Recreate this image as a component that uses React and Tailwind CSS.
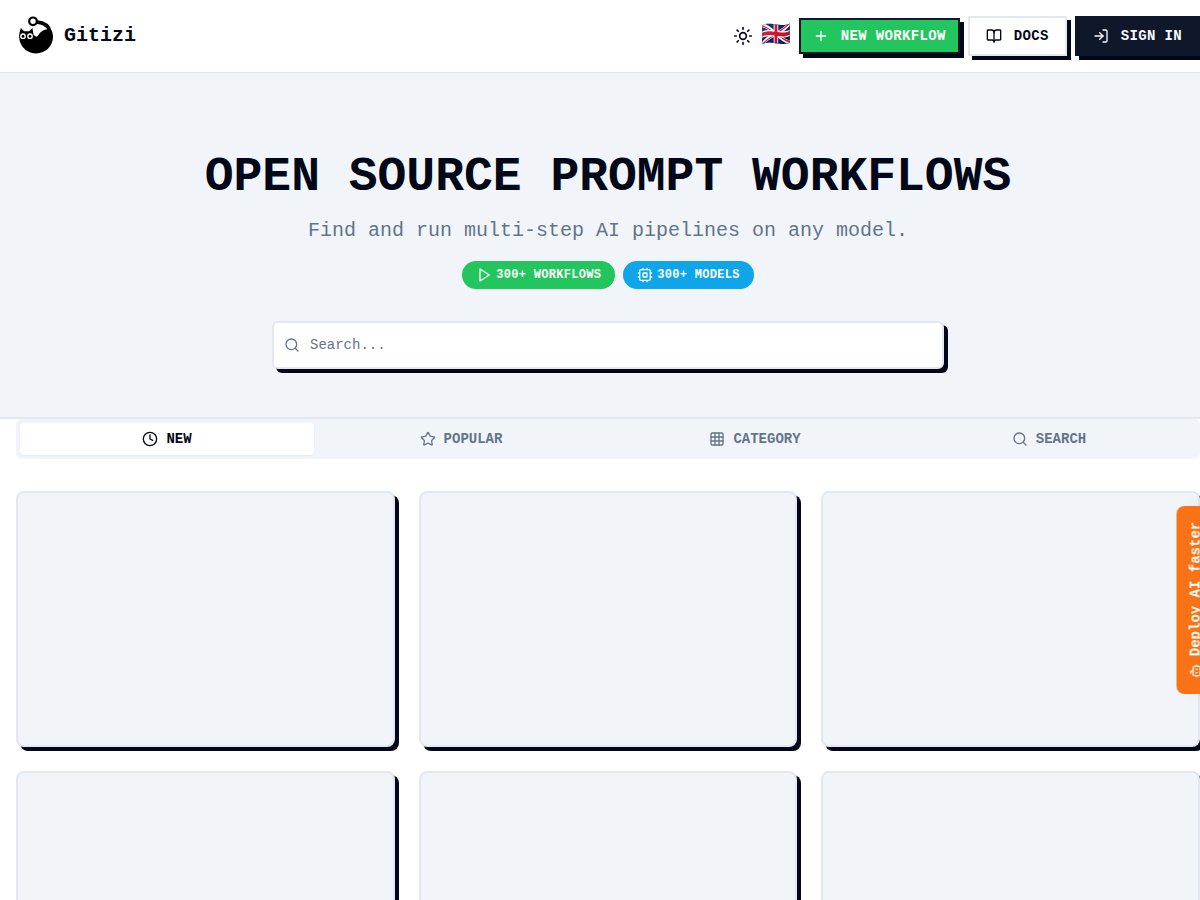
import React, { useState } from 'react'
import { BookOpen, Bot, Clock, Grid3x3, LogIn, Plus, Search, Star, Sun } from 'lucide-react';

const tabs = [
  { id: "new", label: "NEW", Icon: Clock },
  { id: "popular", label: "POPULAR", Icon: Star },
  { id: "category", label: "CATEGORY", Icon: Grid3x3 },
  { id: "search", label: "SEARCH", Icon: Search },
];

const Logo = () => (
  <svg viewBox="0 0 40 40" className="h-10 w-10" aria-hidden="true">
    <path
      d="M4.8 12L8.2 15.2H13L16.4 12L17.6 19L20.2 20.8Q22.4 19.8 23.4 17.4Q26 14.2 31.4 13.3Q28 8.4 21 7.9V4.2Q33.5 4.8 36.3 16.2Q38 22 35.6 27.5A17 17 0 0 1 3.6 16.5Z"
      fill="#000"
    />
    <circle cx="17" cy="5.3" r="3.8" fill="#fff" stroke="#000" strokeWidth="2.2" />
    <circle cx="7" cy="20.2" r="2.2" fill="#000" stroke="#fff" strokeWidth="1.4" />
    <circle cx="14" cy="20.2" r="2.2" fill="#000" stroke="#fff" strokeWidth="1.4" />
  </svg>
)

const PlayIcon = () => (
  <svg viewBox="0 0 24 24" className="h-4 w-4" fill="none" stroke="currentColor" strokeWidth="2" strokeLinecap="round" strokeLinejoin="round">
    <polygon points="6 3 20 12 6 21 6 3" />
  </svg>
)

const ChipIcon = () => (
  <svg viewBox="0 0 24 24" className="h-4 w-4" fill="none" stroke="currentColor" strokeWidth="2" strokeLinecap="round" strokeLinejoin="round">
    <rect x="4" y="4" width="16" height="16" rx="2" />
    <rect x="9" y="9" width="6" height="6" rx="1" />
    <path d="M15 2v2M15 20v2M2 15h2M2 9h2M20 15h2M20 9h2M9 2v2M9 20v2" />
  </svg>
)

const Header = () => {
  const button = "flex items-center gap-3 border-2 text-sm font-bold tracking-wide shadow-[4px_4px_0_0_#020817]";

  return (
    <header className="flex h-[73px] items-center justify-between border-b border-slate-200 bg-white pl-4">
      <a href="#" className="flex items-center gap-2">
        <Logo />
        <span className="text-xl font-bold">Gitizi</span>
      </a>
      <div className="mr-4 flex items-center gap-2">
        <button type="button" aria-label="Toggle theme">
          <Sun size={20} />
        </button>
        <button type="button" aria-label="Language" className="text-2xl">🇬🇧</button>
        <button type="button" className={`${button} h-9 border-[#0f172a] bg-[#22c55e] px-3 text-white`}>
          <Plus size={16} />
          NEW WORKFLOW
        </button>
        <a href="#docs" className={`${button} h-10 border-slate-200 bg-white px-4`}>
          <BookOpen size={16} />
          DOCS
        </a>
        <a href="#signin" className={`${button} h-10 border-[#0f172a] bg-[#0f172a] px-4 text-slate-50`}>
          <LogIn size={16} />
          SIGN IN
        </a>
      </div>
    </header>
  )
}

const Hero = () => (
  <section className="flex flex-col items-center border-b-2 border-slate-200 bg-slate-100 px-4 pt-20 pb-12 text-center">
    <h1 className="text-5xl leading-none font-bold">OPEN SOURCE PROMPT WORKFLOWS</h1>
    <p className="mt-4 text-xl text-[#64748b]">Find and run multi-step AI pipelines on any model.</p>
    <div className="mt-4 flex gap-2 text-xs font-bold tracking-wide text-white">
      <span className="flex h-7 items-center gap-1 rounded-full bg-[#22c55e] px-3.5">
        <PlayIcon />
        300+ WORKFLOWS
      </span>
      <span className="flex h-7 items-center gap-1 rounded-full bg-[#0ea5e9] px-3.5">
        <ChipIcon />
        300+ MODELS
      </span>
    </div>
    <label className="mt-8 flex h-12 w-full max-w-2xl items-center gap-2.5 rounded-md border-2 border-slate-200 bg-white px-2.5 text-[#64748b] shadow-[4px_4px_0_0_#020817]">
      <Search size={16} />
      <input
        type="text"
        aria-label="Search"
        placeholder="Search..."
        className="flex-1 text-sm outline-none placeholder:text-[#64748b]"
      />
    </label>
  </section>
)

const App = () => {
  const [activeTab, setActiveTab] = useState("new");

  return (
    <div className="h-screen overflow-hidden bg-white font-['Liberation_Mono',monospace] text-[#020817]">
      <div className="-mr-4">
        <Header />
        <Hero />
        <main className="px-4">
          <div role="tablist" className="grid h-10 grid-cols-4 rounded-md bg-slate-100 p-1">
            {
              tabs.map(({ id, label, Icon }) => (
                <button
                  key={id}
                  type="button"
                  role="tab"
                  aria-selected={activeTab === id}
                  onClick={() => setActiveTab(id)}
                  className={`flex items-center justify-center gap-2 rounded-sm text-sm font-bold ${activeTab === id ? "bg-white shadow-xs" : "text-[#64748b]"}`}
                >
                  <Icon size={16} />
                  {label}
                </button>
              ))
            }
          </div>
          <div className="mt-8 grid grid-cols-3 gap-6">
            {
              [1, 2, 3, 4, 5, 6].map((card) => (
                <div key={card} className="h-64 rounded-lg border-2 border-slate-200 bg-slate-100 shadow-[4px_4px_0_0_#020817]"></div>
              ))
            }
          </div>
        </main>
      </div>
      <button
        type="button"
        className="fixed top-2/3 -right-[89px] flex h-[37px] w-[188px] -translate-y-1/2 -rotate-90 items-center justify-center gap-2 rounded-t-lg bg-[#f97316] text-sm font-bold whitespace-nowrap text-white shadow-lg"
      >
        <Bot size={14} />
        Deploy AI faster
      </button>
    </div>
  )
}

export default App
